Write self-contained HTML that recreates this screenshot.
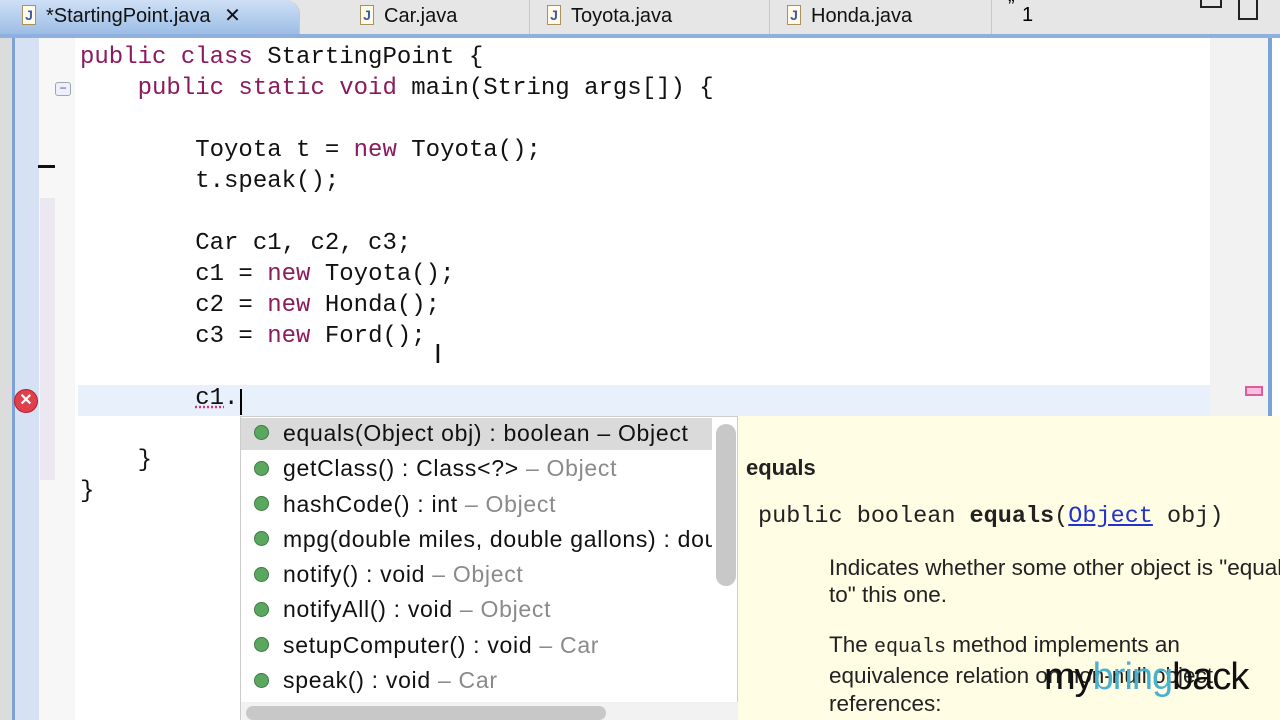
<!DOCTYPE html>
<html><head><meta charset="utf-8"><style>
*{margin:0;padding:0;box-sizing:border-box}
body{width:1280px;height:720px;overflow:hidden;background:#fff;position:relative;font-family:"Liberation Sans",sans-serif}
.abs{position:absolute}
.tabbar{left:0;top:0;width:1280px;height:38px;background:#e6e6e6;border-bottom:4px solid #8fb0df}
.tab{top:0;height:34px;font-size:20px;color:#111;line-height:32px;border-right:1px solid #c8c8c8}
.ic{display:inline-block;width:14px;height:20px;border:1px solid #a89060;background:#fffbe8;color:#3a5da8;font-size:14px;font-weight:bold;line-height:18px;text-align:center;vertical-align:middle;margin-right:10px;position:relative;top:-2px}
.code{font-family:"Liberation Mono",monospace;font-size:24px;color:#111;white-space:pre;line-height:31px}
.k{color:#8b1a5e}
.pop{font-size:23px;letter-spacing:0.7px;color:#111;white-space:pre}
.g{color:#8a8a8a}
.dot{display:inline-block;width:15px;height:15px;border-radius:50%;background:#5aa860;border:1px solid #3c7a40;margin-right:14px;vertical-align:middle;position:relative;top:-2px}
</style></head><body>
<div class="abs tabbar"></div>
<div class="abs tab" style="left:0;width:300px;background:linear-gradient(#cfe0f5,#9cbde6);padding-left:22px;border-radius:0 14px 0 0"><span class="ic">J</span>*StartingPoint.java <span style="margin-left:8px">✕</span></div>
<div class="abs tab" style="left:355px;width:175px;padding-left:5px"><span class="ic">J</span>Car.java</div>
<div class="abs tab" style="left:545px;width:225px;padding-left:2px"><span class="ic">J</span>Toyota.java</div>
<div class="abs tab" style="left:782px;width:210px;padding-left:5px"><span class="ic">J</span>Honda.java</div>
<div class="abs" style="left:1008px;top:-4px;font-size:20px">”</div>
<div class="abs" style="left:1022px;top:4px;font-size:20px">1</div>
<div class="abs" style="left:1200px;top:0;width:22px;height:8px;border:2px solid #222;border-top:none"></div>
<div class="abs" style="left:1238px;top:0;width:20px;height:20px;border:2px solid #222;border-top:none"></div>
<!-- gutter -->
<div class="abs" style="left:0;top:38px;width:12px;height:682px;background:#dcdcdc"></div>
<div class="abs" style="left:12px;top:38px;width:3px;height:682px;background:#7da2d8"></div>
<div class="abs" style="left:15px;top:38px;width:24px;height:682px;background:#d6e2f4"></div>
<div class="abs" style="left:39px;top:38px;width:36px;height:682px;background:#f7f7f7"></div>
<div class="abs" style="left:40px;top:198px;width:15px;height:282px;background:#ebe8f2"></div>
<div class="abs" style="left:38px;top:165px;width:17px;height:3px;background:#111"></div>
<div class="abs" style="left:55px;top:82px;width:16px;height:14px;border:1px solid #9aa;border-radius:3px;background:#eef;font-size:12px;line-height:10px;text-align:center;color:#555">−</div>
<div class="abs" style="left:14px;top:389px;width:24px;height:24px;border-radius:50%;background:#e0404a;border:1px solid #b02030;color:#fff;font-size:16px;font-weight:bold;text-align:center;line-height:22px">✕</div>
<!-- right ruler -->
<div class="abs" style="left:1210px;top:38px;width:60px;height:682px;background:#f2f2f2"></div>
<div class="abs" style="left:1268px;top:38px;width:4px;height:682px;background:#7da2d8"></div>
<div class="abs" style="left:1245px;top:386px;width:18px;height:10px;border:2px solid #e05aa0;background:#f7c0dc"></div>
<!-- current line -->
<div class="abs" style="left:78px;top:385px;width:1132px;height:31px;background:#e8f0fb"></div>
<div class="abs code" style="left:80px;top:42px"><span class="k">public class</span> StartingPoint {
    <span class="k">public static void</span> main(String args[]) {

        Toyota t = <span class="k">new</span> Toyota();
        t.speak();

        Car c1, c2, c3;
        c1 = <span class="k">new</span> Toyota();
        c2 = <span class="k">new</span> Honda();
        c3 = <span class="k">new</span> Ford();

        <span style="text-decoration:underline dotted #e0307a">c1</span>.

    }
}</div>
<div class="abs" style="left:240px;top:389px;width:2px;height:26px;background:#000"></div>
<div class="abs" style="left:434px;top:338px;font-size:28px;color:#111">I</div>
<!-- completion popup -->
<div class="abs" style="left:240px;top:416px;width:498px;height:304px;background:#fff;border:1px solid #ccc"></div>
<div class="abs" style="left:241px;top:418px;width:471px;height:32px;background:#dadada"></div>
<div class="abs pop" style="left:254px;top:416px;line-height:35.3px;width:458px;overflow:hidden;height:286px"><div><span class="dot"></span>equals(Object obj) : boolean – Object</div><div><span class="dot"></span>getClass() : Class&lt;?&gt; <span class="g">– Object</span></div><div><span class="dot"></span>hashCode() : int <span class="g">– Object</span></div><div><span class="dot"></span>mpg(double miles, double gallons) : double</div><div><span class="dot"></span>notify() : void <span class="g">– Object</span></div><div><span class="dot"></span>notifyAll() : void <span class="g">– Object</span></div><div><span class="dot"></span>setupComputer() : void <span class="g">– Car</span></div><div><span class="dot"></span>speak() : void <span class="g">– Car</span></div></div>
<div class="abs" style="left:716px;top:424px;width:20px;height:162px;background:#c8c8c8;border-radius:10px"></div>
<div class="abs" style="left:241px;top:702px;width:497px;height:18px;background:#f2f2f2"></div>
<div class="abs" style="left:246px;top:706px;width:360px;height:14px;background:#c8c8c8;border-radius:7px"></div>
<!-- doc popup -->
<div class="abs" style="left:738px;top:416px;width:542px;height:304px;background:#fffde4"></div>
<div class="abs" style="left:746px;top:455px;font-size:22px;font-weight:bold;color:#222">equals</div>
<div class="abs" style="left:758px;top:503px;font-family:'Liberation Mono',monospace;font-size:23.5px;color:#222;white-space:pre">public boolean <b>equals</b>(<span style="color:#2233cc;text-decoration:underline">Object</span> obj)</div>
<div class="abs" style="left:829px;top:554px;font-size:22.5px;color:#222;line-height:27px;white-space:pre">Indicates whether some other object is "equal
to" this one.</div>
<div class="abs" style="left:829px;top:631px;font-size:22.5px;color:#222;line-height:28px;white-space:pre">The <span style="font-family:'Liberation Mono',monospace;font-size:20px">equals</span> method implements an
equivalence relation on non-null object
references:</div>
<div class="abs" style="left:1044px;top:656px;font-size:38px;color:#111;letter-spacing:-1px">my<span style="color:#4ab0d0">bring</span>back</div>
</body></html>
